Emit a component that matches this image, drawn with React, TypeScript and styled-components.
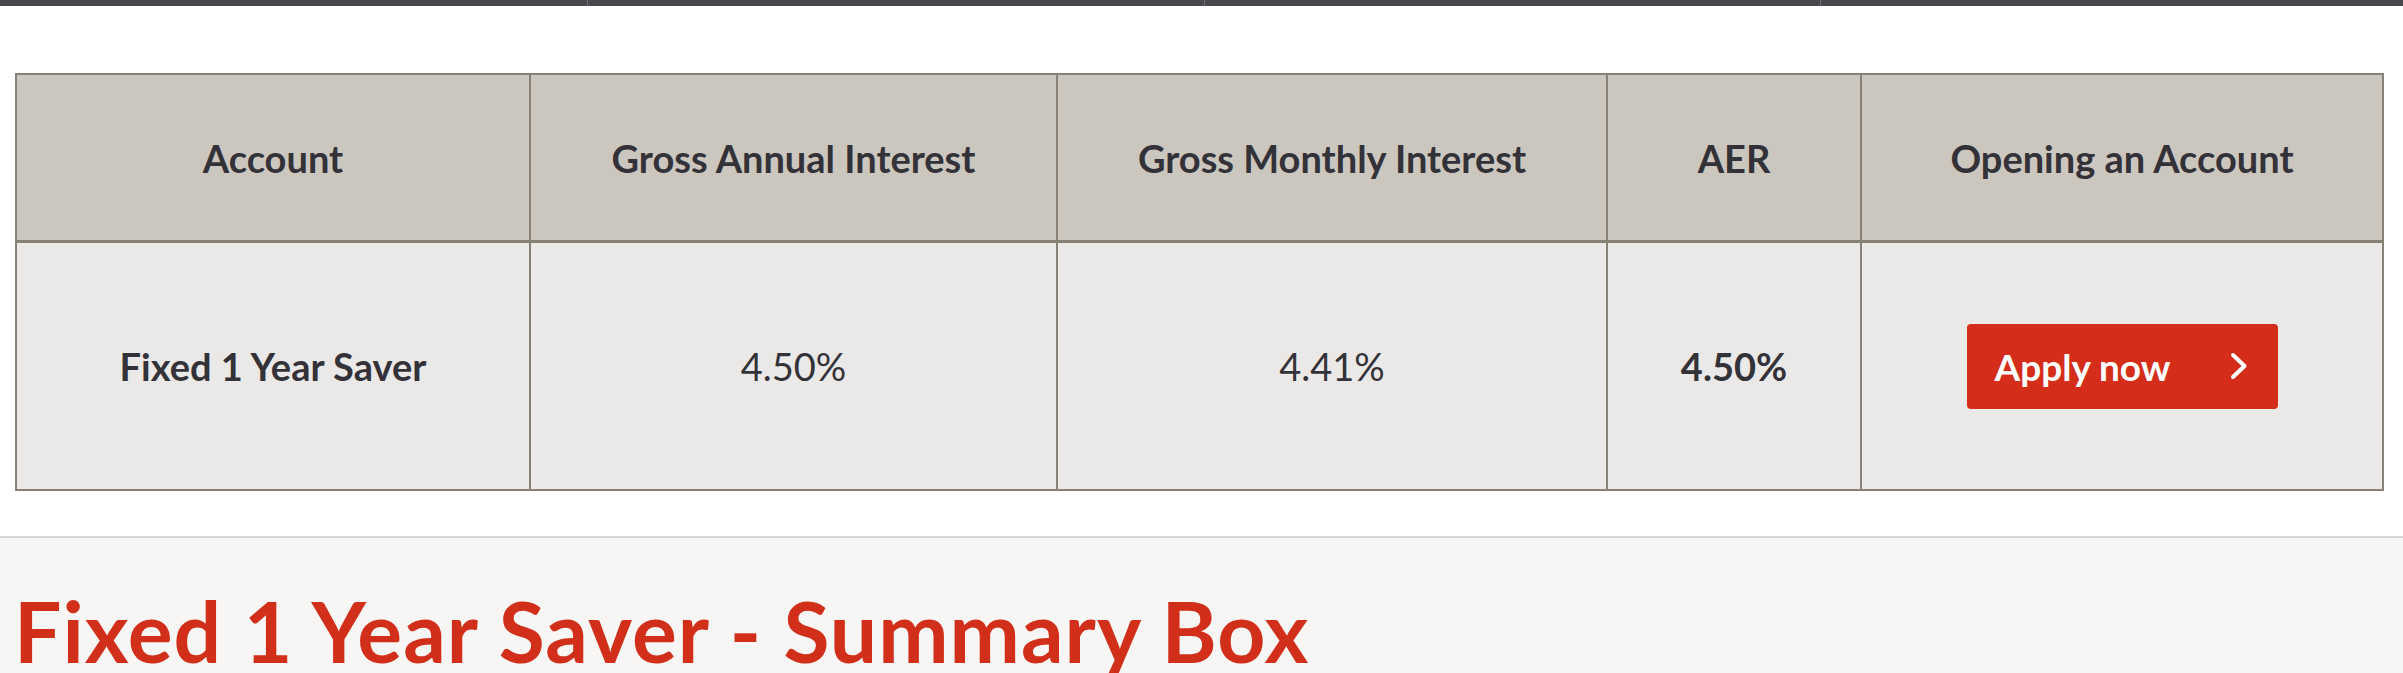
import { createGlobalStyle, styled } from 'styled-components';

const GlobalStyle = createGlobalStyle`
  body {
    margin: 0;
    background: #fff;
    font-family: Lato, 'Noto Sans', sans-serif;
    color: #333238;
  }
`;

const TopNav = styled.div`
  display: grid;
  grid-template-columns: 587px 616px 615px 1fr;
  gap: 1px;
  height: 6px;
  background: #707074;
`;

const NavTab = styled.div`
  background: #47474c;
`;

const TableSection = styled.section`
  padding: 67px 21px 45px 15px;
`;

const RatesTable = styled.table`
  width: 100%;
  table-layout: fixed;
  border-collapse: collapse;
  border: 2px solid #878175;
`;

const HeadCell = styled.th`
  height: 165px;
  padding: 0;
  background: #cbc7bf;
  border: 2px solid #878175;
  border-bottom-width: 3px;
  font-size: 38px;
  font-weight: 700;
  text-align: center;
  vertical-align: middle;
`;

const BodyCell = styled.td<{ $bold?: boolean }>`
  height: 246px;
  padding: 0;
  background: #ebe9e7;
  border: 2px solid #878175;
  font-size: 38px;
  font-weight: ${(p) => (p.$bold ? 700 : 400)};
  text-align: center;
  vertical-align: middle;
`;

const ApplyButton = styled.a`
  display: inline-flex;
  align-items: center;
  justify-content: space-between;
  box-sizing: border-box;
  width: 311px;
  height: 85px;
  padding: 0 30px 0 28px;
  border-radius: 4px;
  background: #d42d19;
  color: #fff;
  font-size: 37px;
  font-weight: 700;
  text-decoration: none;
  vertical-align: middle;
`;

const Summary = styled.section`
  height: 140px;
  overflow: hidden;
  border-top: 2px solid #d6d4d2;
  background: #f7f6f4;
  padding: 0 14px;
`;

const SummaryTitle = styled.h2`
  margin: 0;
  padding-top: 51px;
  font-size: 84px;
  line-height: 1;
  letter-spacing: 1px;
  font-weight: 700;
  color: #d22f1a;
  white-space: nowrap;
`;

const columns = [514, 527, 550, 254, 522];

const Chevron = () => (
  <svg width="18" height="28" viewBox="0 0 18 28" fill="none">
    <path d="M3 3 L14.5 14 L3 25" stroke="#fff" strokeWidth="4" strokeLinecap="round" strokeLinejoin="round" />
  </svg>
);

const App = () => {
  return (
    <>
      <GlobalStyle />
      <TopNav>
        <NavTab />
        <NavTab />
        <NavTab />
        <NavTab />
      </TopNav>
      <TableSection>
        <RatesTable>
          <colgroup>
            {columns.map((w, i) => (
              <col key={i} style={{ width: w }} />
            ))}
          </colgroup>
          <thead>
            <tr>
              <HeadCell>Account</HeadCell>
              <HeadCell>Gross Annual Interest</HeadCell>
              <HeadCell>Gross Monthly Interest</HeadCell>
              <HeadCell>AER</HeadCell>
              <HeadCell>Opening an Account</HeadCell>
            </tr>
          </thead>
          <tbody>
            <tr>
              <BodyCell $bold>Fixed 1 Year Saver</BodyCell>
              <BodyCell>4.50%</BodyCell>
              <BodyCell>4.41%</BodyCell>
              <BodyCell $bold>4.50%</BodyCell>
              <BodyCell>
                <ApplyButton href="#">
                  Apply now
                  <Chevron />
                </ApplyButton>
              </BodyCell>
            </tr>
          </tbody>
        </RatesTable>
      </TableSection>
      <Summary>
        <SummaryTitle>Fixed 1 Year Saver - Summary Box</SummaryTitle>
      </Summary>
    </>
  );
};

export default App;
